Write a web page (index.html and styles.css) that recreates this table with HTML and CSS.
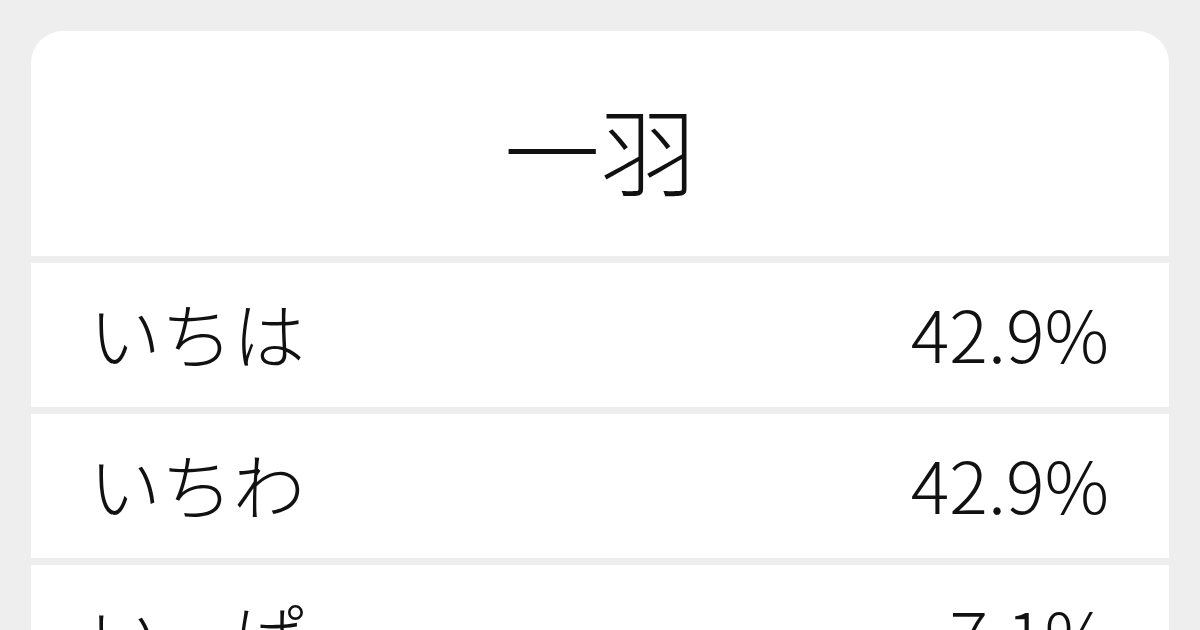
FILE: index.html
```html
<!DOCTYPE html>
<html lang="ja">
<head>
    <meta charset="UTF-8">
    <meta name="viewport" content="width=device-width, initial-scale=1.0">
    <title>一羽 の読み方</title>
    <link rel="stylesheet" href="styles.css">
</head>
<body>

    <div class="card">
        <!-- Word -->
        <div class="title">一羽</div>

        <!-- Readings -->
        <div class="row">
            <span class="kana">いちは</span>
            <span class="pct">42.9%</span>
        </div>
        <div class="row">
            <span class="kana">いちわ</span>
            <span class="pct">42.9%</span>
        </div>
        <div class="row">
            <span class="kana">いっぱ</span>
            <span class="pct">7.1%</span>
        </div>
    </div>

</body>
</html>
```

FILE: styles.css
```css
body {
    margin: 0;
    padding: 31px;
    height: 630px;
    box-sizing: border-box;
    overflow: hidden; /* only the top of the list fits */
    background-color: #eeeeee;
    font-family: "Noto Sans CJK JP", "Noto Sans", sans-serif;
    font-weight: 300;
    color: #111;
}

.card {
    display: flex;
    flex-direction: column;
    gap: 7px;
    border-radius: 32px 32px 0 0;
    overflow: hidden;
}

.title {
    height: 225px;
    display: flex;
    justify-content: center;
    align-items: center;
    padding-top: 8px;
    box-sizing: border-box;
    background-color: #fff;
    font-size: 96px;
    line-height: 1;
}

.row {
    flex: none;
    height: 144px;
    display: flex;
    justify-content: space-between;
    align-items: center;
    padding: 0 60px 6px 58px;
    box-sizing: border-box;
    background-color: #fff;
    font-size: 72px;
    line-height: 1;
}
```
